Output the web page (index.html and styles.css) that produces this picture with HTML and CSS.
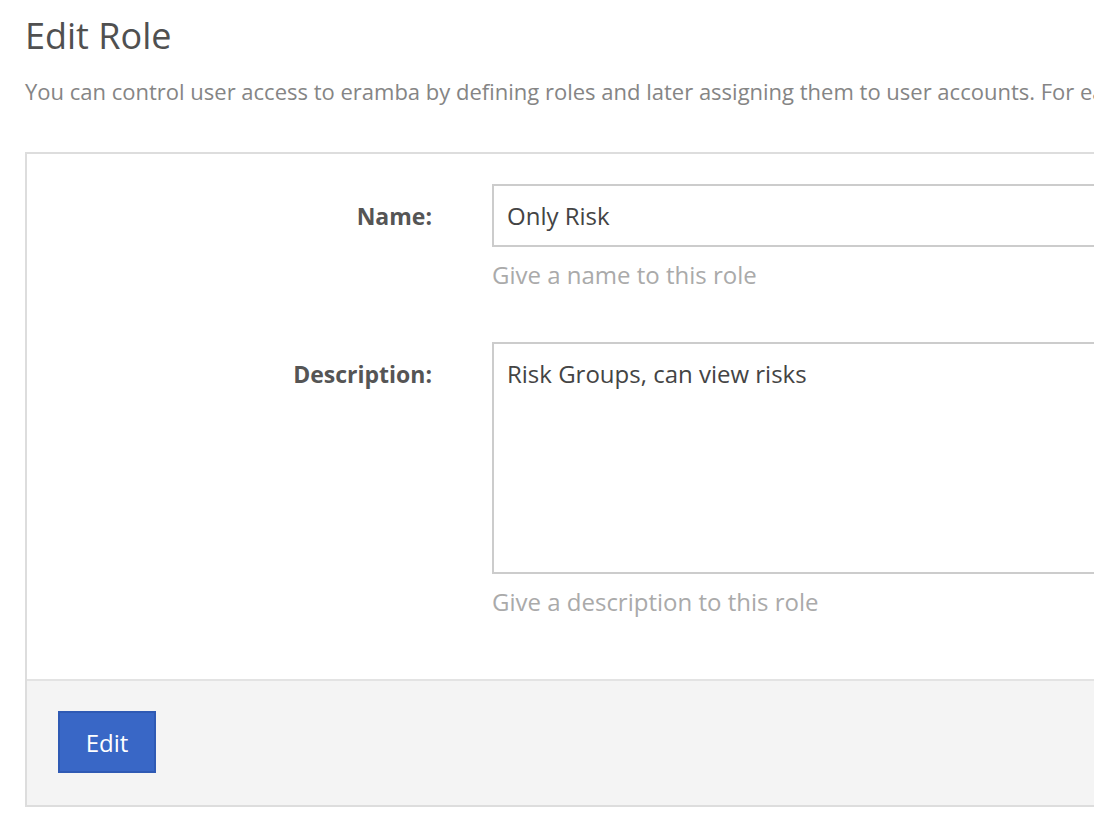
FILE: index.html
```html
<!DOCTYPE html>
<html lang="en">
<head>
<meta charset="utf-8">
<title>Edit Role</title>
<link rel="stylesheet" href="styles.css">
</head>
<body>
<div class="page">
  <h1 class="title">Edit Role</h1>
  <p class="intro">You can control user access to eramba by defining roles and later assigning them to user accounts. For each role you can define which sections of the system users can access.</p>
  <form class="card">
    <div class="card-body">
      <div class="row">
        <label class="label" for="name">Name:</label>
        <div class="field">
          <input class="input" id="name" type="text" value="Only Risk">
          <div class="help">Give a name to this role</div>
        </div>
      </div>
      <div class="row">
        <label class="label" for="desc">Description:</label>
        <div class="field">
          <textarea class="input textarea" id="desc">Risk Groups, can view risks</textarea>
          <div class="help">Give a description to this role</div>
        </div>
      </div>
    </div>
    <div class="card-footer">
      <button class="btn" type="button">Edit</button>
    </div>
  </form>
</div>
</body>
</html>
```
FILE: styles.css
```css
html, body {
  margin: 0;
  padding: 0;
  overflow: hidden;
  background: #fff;
}
body {
  font-family: "Open Sans", "Liberation Sans", sans-serif;
  color: #555;
}
.page {
  padding: 13px 0 0 25px;
  width: 1400px;
}
.title {
  margin: 0;
  font-size: 36px;
  font-weight: 400;
  line-height: 46px;
  color: #505050;
}
.intro {
  margin: 17px 0 0;
  font-size: 22px;
  line-height: 30px;
  color: #858585;
  white-space: nowrap;
}
.card {
  margin-top: 46px;
  width: 1300px;
  border: 2px solid #dddddd;
  background: #fff;
}
.card-body {
  padding: 30px 0 61px;
  display: flex;
  flex-direction: column;
  gap: 51px;
}
.row {
  display: flex;
  gap: 60px;
}
.label {
  width: 405px;
  flex: none;
  text-align: right;
  font-size: 23px;
  font-weight: 700;
  color: #555;
  line-height: 32px;
  padding-top: 16px;
}
.field {
  flex: 1;
  display: flex;
  flex-direction: column;
}
.input {
  box-sizing: border-box;
  width: 100%;
  height: 63px;
  margin: 0;
  padding: 0 13px;
  border: 2px solid #cccccc;
  border-radius: 0;
  font-family: inherit;
  font-size: 24px;
  color: #444;
  background: #fff;
  outline: none;
}
.textarea {
  display: block;
  height: 232px;
  padding: 14px 13px;
  line-height: 32px;
  resize: none;
}
.help {
  margin-top: 12px;
  font-size: 24px;
  line-height: 32px;
  color: #aaaaaa;
}
.card-footer {
  background: #f4f4f4;
  border-top: 2px solid #e3e3e3;
  padding: 30px 0 32px 31px;
}
.btn {
  display: block;
  width: 98px;
  height: 62px;
  margin: 0;
  padding: 0;
  background: #3967c6;
  border: 2px solid #2f5ab4;
  border-radius: 0;
  color: #fff;
  font-family: inherit;
  font-size: 24px;
  cursor: pointer;
}
```
